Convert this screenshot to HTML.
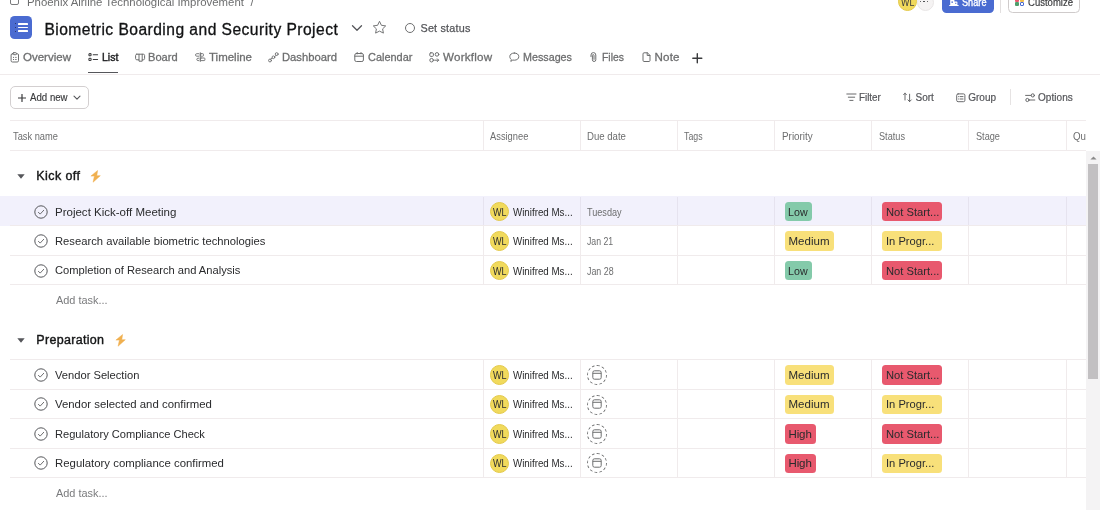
<!DOCTYPE html>
<html><head><meta charset="utf-8"><title>Biometric Boarding and Security Project</title>
<style>
*{box-sizing:border-box;margin:0;padding:0}
html,body{width:1100px;height:510px;overflow:hidden;background:#fff}
body{font-family:"Liberation Sans",sans-serif;position:relative}
.t{position:absolute;white-space:nowrap;line-height:normal}
.b{position:absolute;display:block}
#app{position:absolute;left:0;top:0;width:1100px;height:510px;overflow:hidden;will-change:transform}
</style></head><body>
<div id="app">
<div class="b" style="left:10.4px;top:-4.2px;width:9px;height:9.5px;border:1.1px solid #7a7b7d;border-radius:2px;"></div>
<div class="t" style="left:26.60px;top:-5.50px;font-size:11.6px;color:#6d6e6f;transform:scaleX(0.9821);transform-origin:0 0;">Phoenix Airline Technological Improvement</div>
<div class="t" style="left:250.40px;top:-5.50px;font-size:11.6px;color:#6d6e6f;">/</div>
<div class="b" style="left:916.6px;top:-6.4px;width:17px;height:17px;background:#f5f3f3;border-radius:50%;border:1px solid #e8e5e5;"></div>
<div class="b" style="left:919.6px;top:0.8px;width:1.6px;height:1.6px;background:#3a3b3d;border-radius:50%;"></div>
<div class="b" style="left:923.1px;top:0.8px;width:1.6px;height:1.6px;background:#3a3b3d;border-radius:50%;"></div>
<div class="b" style="left:926.6px;top:0.8px;width:1.6px;height:1.6px;background:#3a3b3d;border-radius:50%;"></div>
<div class="b" style="left:897.6px;top:-8px;width:19px;height:19px;background:#f1da5c;border-radius:50%;border:0.6px solid #e3c94a;"></div>
<div class="t" style="left:901.00px;top:-3.50px;font-size:10px;color:#3a3b3d;transform:scaleX(0.8933);transform-origin:0 0;">WL</div>
<div class="b" style="left:942px;top:-12px;width:51.8px;height:25px;background:#4a6bd1;border-radius:4.5px;"></div>
<svg class="b" style="left:949px;top:-4.4px;" width="10" height="10" viewBox="0 0 10 10" fill="none"><path d="M1.2 9.2V1.8c0-0.4 0.3-0.7 0.7-0.7h2.8c0.4 0 0.7 0.3 0.7 0.7V9.200z M5.4 9.2V5.400h2.300c0.400 0 0.700 0.300 0.700 0.700v3.100z M0.200 9h9.400v1H0.200z" fill="#fff"/><path d="M2.400 5.600h1.600v1.200H2.400z M6.300 6.800h1v1.200h-1z" fill="#4a6bd1"/></svg>
<div class="t" style="left:962.00px;top:-4.30px;font-size:11.3px;color:#fff;transform:scaleX(0.8125);transform-origin:0 0;-webkit-text-stroke:0.35px #fff;">Share</div>
<div class="b" style="left:1000px;top:0px;width:1px;height:12.6px;background:#e2dfdf;"></div>
<div class="b" style="left:1008px;top:-12px;width:72px;height:24.6px;background:#fff;border-radius:4.5px;border:1px solid #cfcbcb;"></div>
<div class="b" style="left:1015px;top:-2.5px;width:4px;height:4px;background:#e8596e;border-radius:1px;"></div>
<div class="b" style="left:1020.4px;top:-2.5px;width:4px;height:4px;background:#f1bd4e;border-radius:1px;"></div>
<div class="b" style="left:1015px;top:2.4px;width:4px;height:4px;background:#4f9e6c;border-radius:1px;"></div>
<div class="b" style="left:1020.4px;top:2.4px;width:4px;height:4px;border-radius:1px;border:1px solid #4a6bd1;"></div>
<div class="t" style="left:1028.00px;top:-4.30px;font-size:11.3px;color:#3a3b3d;transform:scaleX(0.8430);transform-origin:0 0;-webkit-text-stroke:0.2px #3a3b3d;">Customize</div>
<div class="b" style="left:10.1px;top:16.4px;width:22.2px;height:22.4px;background:#4a6bd1;border-radius:4.6px;"></div>
<div class="b" style="left:18.2px;top:22.85px;width:9.9px;height:1.9px;background:#fff;border-radius:0.6px;"></div>
<div class="b" style="left:14.8px;top:23.1px;width:1.4px;height:1.4px;background:#232a52;border-radius:50%;"></div>
<div class="b" style="left:18.2px;top:26.6px;width:9.9px;height:1.9px;background:#fff;border-radius:0.6px;"></div>
<div class="b" style="left:14.8px;top:26.85px;width:1.4px;height:1.4px;background:#232a52;border-radius:50%;"></div>
<div class="b" style="left:18.2px;top:30.35px;width:9.9px;height:1.9px;background:#fff;border-radius:0.6px;"></div>
<div class="b" style="left:14.8px;top:30.6px;width:1.4px;height:1.4px;background:#232a52;border-radius:50%;"></div>
<div class="t" style="left:44.40px;top:20.60px;font-size:15.6px;color:#121314;letter-spacing:0.468px;-webkit-text-stroke:0.3px #121314;">Biometric Boarding and Security Project</div>
<svg class="b" style="left:351px;top:24px;" width="12" height="8" viewBox="0 0 12 8" fill="none"><path d="M1.5 1.8 L6 6.2 L10.5 1.8" stroke="#55565a" stroke-width="1.3" stroke-linecap="round" stroke-linejoin="round"/></svg>
<svg class="b" style="left:372px;top:19.6px;" width="15" height="14" viewBox="0 0 15 14" fill="none"><path d="M7.5 1.3 L9.4 5.3 L13.7 5.9 L10.6 8.9 L11.4 13.1 L7.5 11.1 L3.6 13.1 L4.4 8.9 L1.3 5.9 L5.6 5.3 Z" stroke="#6d6e6f" stroke-width="0.95" stroke-linejoin="round"/></svg>
<div class="b" style="left:405px;top:23px;width:10px;height:10px;border:1.2px solid #6d6e6f;border-radius:50%;"></div>
<div class="t" style="left:420.50px;top:21.70px;font-size:10.8px;color:#55565a;letter-spacing:0.197px;-webkit-text-stroke:0.25px #55565a;">Set status</div>
<div class="t" style="left:23.00px;top:49.70px;font-size:11.6px;color:#6d6e6f;transform:scaleX(0.9929);transform-origin:0 0;-webkit-text-stroke:0.3px #6d6e6f;">Overview</div>
<div class="t" style="left:101.60px;top:49.70px;font-size:11.6px;color:#1e1f21;transform:scaleX(0.9085);transform-origin:0 0;-webkit-text-stroke:0.45px #1e1f21;">List</div>
<div class="t" style="left:148.40px;top:49.70px;font-size:11.6px;color:#6d6e6f;transform:scaleX(0.9562);transform-origin:0 0;-webkit-text-stroke:0.3px #6d6e6f;">Board</div>
<div class="t" style="left:208.60px;top:49.70px;font-size:11.6px;color:#6d6e6f;transform:scaleX(0.9907);transform-origin:0 0;-webkit-text-stroke:0.3px #6d6e6f;">Timeline</div>
<div class="t" style="left:282.40px;top:49.70px;font-size:11.6px;color:#6d6e6f;transform:scaleX(0.9692);transform-origin:0 0;-webkit-text-stroke:0.3px #6d6e6f;">Dashboard</div>
<div class="t" style="left:368.00px;top:49.70px;font-size:11.6px;color:#6d6e6f;transform:scaleX(0.9432);transform-origin:0 0;-webkit-text-stroke:0.3px #6d6e6f;">Calendar</div>
<div class="t" style="left:443.00px;top:49.70px;font-size:11.6px;color:#6d6e6f;letter-spacing:0.240px;-webkit-text-stroke:0.3px #6d6e6f;">Workflow</div>
<div class="t" style="left:523.00px;top:49.70px;font-size:11.6px;color:#6d6e6f;transform:scaleX(0.9268);transform-origin:0 0;-webkit-text-stroke:0.3px #6d6e6f;">Messages</div>
<div class="t" style="left:602.40px;top:49.70px;font-size:11.6px;color:#6d6e6f;transform:scaleX(0.8982);transform-origin:0 0;-webkit-text-stroke:0.3px #6d6e6f;">Files</div>
<div class="t" style="left:654.60px;top:49.70px;font-size:11.6px;color:#6d6e6f;letter-spacing:0.124px;-webkit-text-stroke:0.3px #6d6e6f;">Note</div>
<div class="b" style="left:88.4px;top:71.6px;width:29.6px;height:1.8px;background:#55565a;"></div>
<div class="b" style="left:0px;top:74px;width:1100px;height:1px;background:#f0ebec;"></div>
<svg class="b" style="left:10px;top:52px;" width="10" height="11" viewBox="0 0 10 11" fill="none"><rect x="1.1" y="1.7" width="7.4" height="8.3" rx="1.3" stroke="#6d6e6f" stroke-width="1" stroke-linecap="round" stroke-linejoin="round"/><rect x="3.2" y="0.7" width="3.2" height="2" rx="0.6" stroke="#6d6e6f" stroke-width="1" stroke-linecap="round" stroke-linejoin="round" fill="#fff"/><path d="M3.4 5.4h0.3M5.6 5.4h0.6M3.4 7.5h0.3M5.6 7.5h0.6" stroke="#6d6e6f" stroke-width="1" stroke-linecap="round" stroke-linejoin="round" stroke-width="0.9"/></svg>
<svg class="b" style="left:88px;top:52px;" width="11" height="10" viewBox="0 0 11 10" fill="none"><rect x="0.9" y="1.6" width="2.2" height="2.2" rx="0.8" stroke="#3a3b3d" stroke-width="1.05" stroke-linecap="round" stroke-linejoin="round"/><rect x="0.9" y="6.3" width="2.2" height="2.2" rx="0.8" stroke="#3a3b3d" stroke-width="1.05" stroke-linecap="round" stroke-linejoin="round"/><path d="M5.2 2.8h4.4M5.2 7.5h4.4" stroke="#3a3b3d" stroke-width="1.05" stroke-linecap="round" stroke-linejoin="round"/></svg>
<svg class="b" style="left:134.5px;top:52.5px;" width="11" height="10" viewBox="0 0 11 10" fill="none"><path d="M1.8 1.2h6.6c0.7 0 1.2 0.5 1.2 1.2v3.2c0 0.7-0.5 1.2-1.2 1.2H7.2v1.4H4V6.8H1.8C1.1 6.8 0.6 6.3 0.6 5.6V2.4C0.6 1.7 1.1 1.2 1.8 1.2zM4 1.2v5.6M7.2 1.2v5.6" stroke="#6d6e6f" stroke-width="1" stroke-linecap="round" stroke-linejoin="round"/></svg>
<svg class="b" style="left:195px;top:52px;" width="11" height="10" viewBox="0 0 11 10" fill="none"><path d="M5.3 0.7v8.8" stroke="#6d6e6f" stroke-width="0.9" stroke-linecap="round" stroke-linejoin="round"/><rect x="5.3" y="1.7" width="3.2" height="2.5" rx="0.7" stroke="#6d6e6f" stroke-width="0.9" stroke-linecap="round" stroke-linejoin="round"/><path d="M3.9 1.7H1.700c-0.700 0-1.200 0.500-1.200 1.250s0.500 1.250 1.200 1.250H3.900" stroke="#6d6e6f" stroke-width="0.9" stroke-linecap="round" stroke-linejoin="round"/><rect x="5.300" y="6" width="4.600" height="2.600" rx="0.700" stroke="#6d6e6f" stroke-width="0.9" stroke-linecap="round" stroke-linejoin="round"/><path d="M3.900 6.200H3c-0.700 0-1.200 0.500-1.200 1.200s0.500 1.200 1.200 1.200h0.900" stroke="#6d6e6f" stroke-width="0.9" stroke-linecap="round" stroke-linejoin="round"/></svg>
<svg class="b" style="left:268.3px;top:51.8px;" width="11" height="11" viewBox="0 0 11 11" fill="none"><circle cx="2" cy="8.500" r="1.450" stroke="#6d6e6f" stroke-width="0.9" stroke-linecap="round" stroke-linejoin="round"/><circle cx="5.400" cy="5.300" r="1.350" stroke="#6d6e6f" stroke-width="0.9" stroke-linecap="round" stroke-linejoin="round"/><circle cx="8.700" cy="2.100" r="1.450" stroke="#6d6e6f" stroke-width="0.9" stroke-linecap="round" stroke-linejoin="round"/><path d="M2.600 7.100L4.300 6.100M6.500 4.500L8.100 3.500" stroke="#6d6e6f" stroke-width="0.9" stroke-linecap="round" stroke-linejoin="round"/></svg>
<svg class="b" style="left:353.7px;top:52px;" width="11" height="11" viewBox="0 0 11 11" fill="none"><rect x="0.8" y="1.5" width="8.6" height="8" rx="1.5" stroke="#6d6e6f" stroke-width="1" stroke-linecap="round" stroke-linejoin="round"/><path d="M0.8 4.2h8.6M3.2 0.5v1.4M7 0.5v1.4" stroke="#6d6e6f" stroke-width="1" stroke-linecap="round" stroke-linejoin="round"/></svg>
<svg class="b" style="left:429px;top:51.8px;" width="11" height="11" viewBox="0 0 11 11" fill="none"><rect x="0.8" y="0.8" width="3.6" height="3.6" rx="1" stroke="#6d6e6f" stroke-width="1" stroke-linecap="round" stroke-linejoin="round"/><circle cx="8" cy="2.4" r="1.8" stroke="#6d6e6f" stroke-width="1" stroke-linecap="round" stroke-linejoin="round"/><circle cx="2.6" cy="8.2" r="1.8" stroke="#6d6e6f" stroke-width="1" stroke-linecap="round" stroke-linejoin="round"/><path d="M5.6 8.2h4M8.3 6.8l1.4 1.4-1.4 1.4" stroke="#6d6e6f" stroke-width="1" stroke-linecap="round" stroke-linejoin="round"/></svg>
<svg class="b" style="left:508.6px;top:52.4px;" width="11" height="11" viewBox="0 0 11 11" fill="none"><path d="M5.3 1C8 1 9.8 2.5 9.8 4.6S8 8.2 5.3 8.2c-0.5 0-1-0.06-1.5-0.17L1.8 9.4l0.5-1.9C1.4 6.8 0.8 5.8 0.8 4.6 0.8 2.5 2.6 1 5.3 1z" stroke="#6d6e6f" stroke-width="1" stroke-linecap="round" stroke-linejoin="round"/></svg>
<svg class="b" style="left:589.5px;top:52px;" width="8" height="10" viewBox="0 0 8 10" fill="none"><path d="M1 4.6V3a2.4 2.4 0 0 1 4.8 0v4.8a1.7 1.7 0 0 1-3.4 0V3.4a0.8 0.8 0 0 1 1.6 0v4" stroke="#6d6e6f" stroke-width="1" stroke-linecap="round" stroke-linejoin="round"/></svg>
<svg class="b" style="left:641.5px;top:52px;" width="9" height="10" viewBox="0 0 9 10" fill="none"><path d="M1 1.7c0-0.5 0.4-0.9 0.9-0.9h3.5L8 3.4v5.2c0 0.5-0.4 0.9-0.9 0.9H1.9C1.4 9.5 1 9.1 1 8.600z M5.2 0.8v2.7H8" stroke="#6d6e6f" stroke-width="1" stroke-linecap="round" stroke-linejoin="round"/></svg>
<svg class="b" style="left:692px;top:52.6px;" width="11" height="11" viewBox="0 0 11 11" fill="none"><path d="M5.3 0.8v9M0.8 5.3h9" stroke="#3a3b3d" stroke-width="1.4" stroke-linecap="round"/></svg>
<div class="b" style="left:10px;top:86.4px;width:78.6px;height:22.4px;background:#fff;border-radius:5px;border:1px solid #d3cfd0;"></div>
<svg class="b" style="left:18px;top:93.6px;" width="8" height="8" viewBox="0 0 8 8" fill="none"><path d="M4 0.4v7.2M0.4 4h7.2" stroke="#3a3b3d" stroke-width="1.2" stroke-linecap="round"/></svg>
<div class="t" style="left:30.40px;top:92.30px;font-size:10px;color:#3a3b3d;transform:scaleX(0.9662);transform-origin:0 0;-webkit-text-stroke:0.15px #3a3b3d;">Add new</div>
<svg class="b" style="left:73px;top:94.5px;" width="8" height="6" viewBox="0 0 8 6" fill="none"><path d="M1 1.2l3 3 3-3" stroke="#55565a" stroke-width="1.1" stroke-linecap="round" stroke-linejoin="round"/></svg>
<svg class="b" style="left:845.5px;top:93.1px;" width="11" height="9" viewBox="0 0 11 9" fill="none"><path d="M0.8 1h9.2M2.3 4.2h6.4M3.8 7.4h3.2" stroke="#616264" stroke-width="0.95" stroke-linecap="round" stroke-linejoin="round"/></svg>
<div class="t" style="left:858.90px;top:92.30px;font-size:10px;color:#55565a;transform:scaleX(0.9810);transform-origin:0 0;-webkit-text-stroke:0.2px #55565a;">Filter</div>
<svg class="b" style="left:902px;top:92px;" width="11" height="11" viewBox="0 0 11 11" fill="none"><path d="M3 8V1.2M1.6 2.7L3 1.2l1.4 1.5M7.6 2.2v7.4M5.9 7.9l1.7 1.7 1.7-1.7" stroke="#616264" stroke-width="0.95" stroke-linecap="round" stroke-linejoin="round"/></svg>
<div class="t" style="left:915.60px;top:92.30px;font-size:10px;color:#55565a;letter-spacing:-0.035px;-webkit-text-stroke:0.2px #55565a;">Sort</div>
<svg class="b" style="left:955.5px;top:93px;" width="10" height="10" viewBox="0 0 10 10" fill="none"><rect x="0.7" y="0.9" width="8.2" height="7.8" rx="1.4" stroke="#616264" stroke-width="0.95" stroke-linecap="round" stroke-linejoin="round"/><path d="M2.6 3.6h0.4M4.4 3.6h2.6M2.6 6h0.4M4.4 6h2.6" stroke="#616264" stroke-width="0.95" stroke-linecap="round" stroke-linejoin="round" stroke-width="0.9"/></svg>
<div class="t" style="left:968.30px;top:92.30px;font-size:10px;color:#55565a;letter-spacing:-0.019px;-webkit-text-stroke:0.2px #55565a;">Group</div>
<div class="b" style="left:1010px;top:89px;width:1px;height:16px;background:#e6e3e3;"></div>
<svg class="b" style="left:1024.5px;top:93px;" width="11" height="10" viewBox="0 0 11 10" fill="none"><circle cx="7.8" cy="2.4" r="1.6" stroke="#616264" stroke-width="0.95" stroke-linecap="round" stroke-linejoin="round"/><circle cx="2.4" cy="7" r="1.6" stroke="#616264" stroke-width="0.95" stroke-linecap="round" stroke-linejoin="round"/><path d="M0.6 2.4h5.4M4.2 7h5.6" stroke="#616264" stroke-width="0.95" stroke-linecap="round" stroke-linejoin="round"/></svg>
<div class="t" style="left:1038.00px;top:92.30px;font-size:10px;color:#55565a;letter-spacing:0.048px;-webkit-text-stroke:0.2px #55565a;">Options</div>
<div class="b" style="left:10px;top:120px;width:1076px;height:1px;background:#f0ebec;"></div>
<div class="b" style="left:10px;top:150px;width:1076px;height:1px;background:#f0ebec;"></div>
<div class="b" style="left:483px;top:121px;width:1px;height:29px;background:#f0ebec;"></div>
<div class="b" style="left:580px;top:121px;width:1px;height:29px;background:#f0ebec;"></div>
<div class="b" style="left:677px;top:121px;width:1px;height:29px;background:#f0ebec;"></div>
<div class="b" style="left:774px;top:121px;width:1px;height:29px;background:#f0ebec;"></div>
<div class="b" style="left:871.4px;top:121px;width:1px;height:29px;background:#f0ebec;"></div>
<div class="b" style="left:968.4px;top:121px;width:1px;height:29px;background:#f0ebec;"></div>
<div class="b" style="left:1066px;top:121px;width:1px;height:29px;background:#f0ebec;"></div>
<div class="t" style="left:13.40px;top:131.00px;font-size:10.2px;color:#6d6e6f;transform:scaleX(0.9124);transform-origin:0 0;">Task name</div>
<div class="t" style="left:490.00px;top:131.00px;font-size:10.2px;color:#6d6e6f;transform:scaleX(0.9151);transform-origin:0 0;">Assignee</div>
<div class="t" style="left:587.40px;top:131.00px;font-size:10.2px;color:#6d6e6f;transform:scaleX(0.9421);transform-origin:0 0;">Due date</div>
<div class="t" style="left:684.40px;top:131.00px;font-size:10.2px;color:#6d6e6f;transform:scaleX(0.8633);transform-origin:0 0;">Tags</div>
<div class="t" style="left:781.60px;top:131.00px;font-size:10.2px;color:#6d6e6f;transform:scaleX(0.9705);transform-origin:0 0;">Priority</div>
<div class="t" style="left:878.60px;top:131.00px;font-size:10.2px;color:#6d6e6f;transform:scaleX(0.8991);transform-origin:0 0;">Status</div>
<div class="t" style="left:976.00px;top:131.00px;font-size:10.2px;color:#6d6e6f;transform:scaleX(0.9004);transform-origin:0 0;">Stage</div>
<div class="b" style="left:1073px;top:125px;width:13px;height:20px;overflow:hidden">
<div class="t" style="left:0.00px;top:6.00px;font-size:10.2px;color:#6d6e6f;transform:scaleX(0.9554);transform-origin:0 0;">Qu</div>
</div>
<svg class="b" style="left:17.4px;top:173.9px;" width="8" height="5" viewBox="0 0 8 5" fill="none"><path d="M0.3 0.3h7.4L4 4.7z" fill="#55565a"/></svg>
<div class="t" style="left:36.30px;top:169.30px;font-size:12.5px;color:#151617;letter-spacing:0.405px;-webkit-text-stroke:0.4px #151617;">Kick off</div>
<svg class="b" style="left:90.0px;top:170.0px;" width="11" height="13" viewBox="0 0 11 13" fill="none"><path d="M7.6 0.5L0.9 6.1h3.5L3.1 12.2 10.3 5.7H6.8z" fill="#f0b050" stroke="#f0b050" stroke-width="0.5" stroke-linejoin="round"/></svg>
<div class="b" style="left:0px;top:196px;width:1086px;height:30px;background:#f2f1fc;"></div>
<div class="b" style="left:483px;top:197px;width:1px;height:29px;background:#e6e3ef;"></div>
<div class="b" style="left:580px;top:197px;width:1px;height:29px;background:#e6e3ef;"></div>
<div class="b" style="left:677px;top:197px;width:1px;height:29px;background:#e6e3ef;"></div>
<div class="b" style="left:774px;top:197px;width:1px;height:29px;background:#e6e3ef;"></div>
<div class="b" style="left:871.4px;top:197px;width:1px;height:29px;background:#e6e3ef;"></div>
<div class="b" style="left:968.4px;top:197px;width:1px;height:29px;background:#e6e3ef;"></div>
<div class="b" style="left:1066px;top:197px;width:1px;height:29px;background:#e6e3ef;"></div>
<svg class="b" style="left:33.8px;top:204.625px;" width="14" height="14" viewBox="0 0 14 14" fill="none"><circle cx="7" cy="7" r="6.2" stroke="#55565a" stroke-width="1"/><path d="M4.4 7.3l1.8 1.8 3.5-3.8" stroke="#5f6062" stroke-width="0.9" stroke-linecap="round" stroke-linejoin="round"/></svg>
<div class="t" style="left:55.00px;top:204.52px;font-size:11.6px;color:#2a2b2d;transform:scaleX(0.9928);transform-origin:0 0;">Project Kick-off Meeting</div>
<div class="b" style="left:490px;top:201.92499999999998px;width:19.4px;height:19.4px;background:#f1da5c;border-radius:50%;border:0.6px solid #e3c94a;"></div>
<div class="t" style="left:493.00px;top:206.62px;font-size:10px;color:#2a2b2d;transform:scaleX(0.9067);transform-origin:0 0;">WL</div>
<div class="t" style="left:513.40px;top:206.62px;font-size:10px;color:#2a2b2d;transform:scaleX(0.9752);transform-origin:0 0;">Winifred Ms...</div>
<div class="t" style="left:587.40px;top:206.62px;font-size:10px;color:#6d6e6f;transform:scaleX(0.9109);transform-origin:0 0;">Tuesday</div>
<div class="b" style="left:785px;top:202.02499999999998px;width:26.6px;height:19.4px;background:#84caaa;border-radius:3.5px;"></div>
<div class="t" style="left:788.40px;top:205.62px;font-size:11.5px;color:#2a2b2d;transform:scaleX(0.9290);transform-origin:0 0;">Low</div>
<div class="b" style="left:882px;top:202.02499999999998px;width:60px;height:19.4px;background:#e8596e;border-radius:3.5px;"></div>
<div class="t" style="left:885.60px;top:205.62px;font-size:11.5px;color:#2a2b2d;transform:scaleX(0.9716);transform-origin:0 0;">Not Start...</div>
<div class="b" style="left:10px;top:225px;width:1076px;height:1px;background:#f0ebec;"></div>
<div class="b" style="left:483px;top:226px;width:1px;height:29px;background:#f0ebec;"></div>
<div class="b" style="left:580px;top:226px;width:1px;height:29px;background:#f0ebec;"></div>
<div class="b" style="left:677px;top:226px;width:1px;height:29px;background:#f0ebec;"></div>
<div class="b" style="left:774px;top:226px;width:1px;height:29px;background:#f0ebec;"></div>
<div class="b" style="left:871.4px;top:226px;width:1px;height:29px;background:#f0ebec;"></div>
<div class="b" style="left:968.4px;top:226px;width:1px;height:29px;background:#f0ebec;"></div>
<div class="b" style="left:1066px;top:226px;width:1px;height:29px;background:#f0ebec;"></div>
<svg class="b" style="left:33.8px;top:234.075px;" width="14" height="14" viewBox="0 0 14 14" fill="none"><circle cx="7" cy="7" r="6.2" stroke="#55565a" stroke-width="1"/><path d="M4.4 7.3l1.8 1.8 3.5-3.8" stroke="#5f6062" stroke-width="0.9" stroke-linecap="round" stroke-linejoin="round"/></svg>
<div class="t" style="left:55.00px;top:233.97px;font-size:11.6px;color:#2a2b2d;transform:scaleX(0.9687);transform-origin:0 0;">Research available biometric technologies</div>
<div class="b" style="left:490px;top:231.37499999999997px;width:19.4px;height:19.4px;background:#f1da5c;border-radius:50%;border:0.6px solid #e3c94a;"></div>
<div class="t" style="left:493.00px;top:236.07px;font-size:10px;color:#2a2b2d;transform:scaleX(0.9067);transform-origin:0 0;">WL</div>
<div class="t" style="left:513.40px;top:236.07px;font-size:10px;color:#2a2b2d;transform:scaleX(0.9752);transform-origin:0 0;">Winifred Ms...</div>
<div class="t" style="left:587.40px;top:236.07px;font-size:10px;color:#6d6e6f;transform:scaleX(0.8726);transform-origin:0 0;">Jan 21</div>
<div class="b" style="left:785px;top:231.47499999999997px;width:48.6px;height:19.4px;background:#f8e07a;border-radius:3.5px;"></div>
<div class="t" style="left:788.40px;top:235.07px;font-size:11.5px;color:#2a2b2d;letter-spacing:0.049px;">Medium</div>
<div class="b" style="left:882px;top:231.47499999999997px;width:60px;height:19.4px;background:#f8e07a;border-radius:3.5px;"></div>
<div class="t" style="left:885.60px;top:235.07px;font-size:11.5px;color:#2a2b2d;transform:scaleX(0.9707);transform-origin:0 0;">In Progr...</div>
<div class="b" style="left:10px;top:255px;width:1076px;height:1px;background:#f0ebec;"></div>
<div class="b" style="left:483px;top:256px;width:1px;height:29px;background:#f0ebec;"></div>
<div class="b" style="left:580px;top:256px;width:1px;height:29px;background:#f0ebec;"></div>
<div class="b" style="left:677px;top:256px;width:1px;height:29px;background:#f0ebec;"></div>
<div class="b" style="left:774px;top:256px;width:1px;height:29px;background:#f0ebec;"></div>
<div class="b" style="left:871.4px;top:256px;width:1px;height:29px;background:#f0ebec;"></div>
<div class="b" style="left:968.4px;top:256px;width:1px;height:29px;background:#f0ebec;"></div>
<div class="b" style="left:1066px;top:256px;width:1px;height:29px;background:#f0ebec;"></div>
<svg class="b" style="left:33.8px;top:263.52500000000003px;" width="14" height="14" viewBox="0 0 14 14" fill="none"><circle cx="7" cy="7" r="6.2" stroke="#55565a" stroke-width="1"/><path d="M4.4 7.3l1.8 1.8 3.5-3.8" stroke="#5f6062" stroke-width="0.9" stroke-linecap="round" stroke-linejoin="round"/></svg>
<div class="t" style="left:55.00px;top:263.43px;font-size:11.6px;color:#2a2b2d;transform:scaleX(0.9621);transform-origin:0 0;">Completion of Research and Analysis</div>
<div class="b" style="left:490px;top:260.82500000000005px;width:19.4px;height:19.4px;background:#f1da5c;border-radius:50%;border:0.6px solid #e3c94a;"></div>
<div class="t" style="left:493.00px;top:265.53px;font-size:10px;color:#2a2b2d;transform:scaleX(0.9067);transform-origin:0 0;">WL</div>
<div class="t" style="left:513.40px;top:265.53px;font-size:10px;color:#2a2b2d;transform:scaleX(0.9752);transform-origin:0 0;">Winifred Ms...</div>
<div class="t" style="left:587.40px;top:265.53px;font-size:10px;color:#6d6e6f;transform:scaleX(0.8859);transform-origin:0 0;">Jan 28</div>
<div class="b" style="left:785px;top:260.925px;width:26.6px;height:19.4px;background:#84caaa;border-radius:3.5px;"></div>
<div class="t" style="left:788.40px;top:264.53px;font-size:11.5px;color:#2a2b2d;transform:scaleX(0.9290);transform-origin:0 0;">Low</div>
<div class="b" style="left:882px;top:260.925px;width:60px;height:19.4px;background:#e8596e;border-radius:3.5px;"></div>
<div class="t" style="left:885.60px;top:264.53px;font-size:11.5px;color:#2a2b2d;transform:scaleX(0.9716);transform-origin:0 0;">Not Start...</div>
<div class="b" style="left:10px;top:284px;width:1076px;height:1px;background:#f0ebec;"></div>
<div class="t" style="left:56.00px;top:293.95px;font-size:11.5px;color:#7a7b7d;transform:scaleX(0.9497);transform-origin:0 0;">Add task...</div>
<svg class="b" style="left:17.4px;top:337.5px;" width="8" height="5" viewBox="0 0 8 5" fill="none"><path d="M0.3 0.3h7.4L4 4.7z" fill="#55565a"/></svg>
<div class="t" style="left:36.30px;top:332.90px;font-size:12.5px;color:#151617;letter-spacing:0.307px;-webkit-text-stroke:0.4px #151617;">Preparation</div>
<svg class="b" style="left:114.6px;top:333.6px;" width="11" height="13" viewBox="0 0 11 13" fill="none"><path d="M7.6 0.5L0.9 6.1h3.5L3.1 12.2 10.3 5.7H6.8z" fill="#f0b050" stroke="#f0b050" stroke-width="0.5" stroke-linejoin="round"/></svg>
<div class="b" style="left:10px;top:359px;width:1076px;height:1px;background:#f0ebec;"></div>
<div class="b" style="left:483px;top:360px;width:1px;height:29px;background:#f0ebec;"></div>
<div class="b" style="left:580px;top:360px;width:1px;height:29px;background:#f0ebec;"></div>
<div class="b" style="left:677px;top:360px;width:1px;height:29px;background:#f0ebec;"></div>
<div class="b" style="left:774px;top:360px;width:1px;height:29px;background:#f0ebec;"></div>
<div class="b" style="left:871.4px;top:360px;width:1px;height:29px;background:#f0ebec;"></div>
<div class="b" style="left:968.4px;top:360px;width:1px;height:29px;background:#f0ebec;"></div>
<div class="b" style="left:1066px;top:360px;width:1px;height:29px;background:#f0ebec;"></div>
<svg class="b" style="left:33.8px;top:367.92500000000007px;" width="14" height="14" viewBox="0 0 14 14" fill="none"><circle cx="7" cy="7" r="6.2" stroke="#55565a" stroke-width="1"/><path d="M4.4 7.3l1.8 1.8 3.5-3.8" stroke="#5f6062" stroke-width="0.9" stroke-linecap="round" stroke-linejoin="round"/></svg>
<div class="t" style="left:55.00px;top:367.83px;font-size:11.6px;color:#2a2b2d;transform:scaleX(0.9622);transform-origin:0 0;">Vendor Selection</div>
<div class="b" style="left:490px;top:365.2250000000001px;width:19.4px;height:19.4px;background:#f1da5c;border-radius:50%;border:0.6px solid #e3c94a;"></div>
<div class="t" style="left:493.00px;top:369.93px;font-size:10px;color:#2a2b2d;transform:scaleX(0.9067);transform-origin:0 0;">WL</div>
<div class="t" style="left:513.40px;top:369.93px;font-size:10px;color:#2a2b2d;transform:scaleX(0.9752);transform-origin:0 0;">Winifred Ms...</div>
<div class="b" style="left:587px;top:365.12500000000006px;width:20px;height:20px;border-radius:50%;border:1px dashed #6d6e6f;"></div>
<svg class="b" style="left:592px;top:369.92500000000007px;" width="10" height="10" viewBox="0 0 10 10" fill="none"><rect x="0.8" y="0.8" width="8.4" height="8.4" rx="1.7" stroke="#6d6e6f" stroke-width="1"/><path d="M0.8 3.3h8.4" stroke="#6d6e6f" stroke-width="1"/></svg>
<div class="b" style="left:785px;top:365.32500000000005px;width:48.6px;height:19.4px;background:#f8e07a;border-radius:3.5px;"></div>
<div class="t" style="left:788.40px;top:368.93px;font-size:11.5px;color:#2a2b2d;letter-spacing:0.049px;">Medium</div>
<div class="b" style="left:882px;top:365.32500000000005px;width:60px;height:19.4px;background:#e8596e;border-radius:3.5px;"></div>
<div class="t" style="left:885.60px;top:368.93px;font-size:11.5px;color:#2a2b2d;transform:scaleX(0.9716);transform-origin:0 0;">Not Start...</div>
<div class="b" style="left:10px;top:389px;width:1076px;height:1px;background:#f0ebec;"></div>
<div class="b" style="left:483px;top:390px;width:1px;height:29px;background:#f0ebec;"></div>
<div class="b" style="left:580px;top:390px;width:1px;height:29px;background:#f0ebec;"></div>
<div class="b" style="left:677px;top:390px;width:1px;height:29px;background:#f0ebec;"></div>
<div class="b" style="left:774px;top:390px;width:1px;height:29px;background:#f0ebec;"></div>
<div class="b" style="left:871.4px;top:390px;width:1px;height:29px;background:#f0ebec;"></div>
<div class="b" style="left:968.4px;top:390px;width:1px;height:29px;background:#f0ebec;"></div>
<div class="b" style="left:1066px;top:390px;width:1px;height:29px;background:#f0ebec;"></div>
<svg class="b" style="left:33.8px;top:397.37500000000006px;" width="14" height="14" viewBox="0 0 14 14" fill="none"><circle cx="7" cy="7" r="6.2" stroke="#55565a" stroke-width="1"/><path d="M4.4 7.3l1.8 1.8 3.5-3.8" stroke="#5f6062" stroke-width="0.9" stroke-linecap="round" stroke-linejoin="round"/></svg>
<div class="t" style="left:55.00px;top:397.28px;font-size:11.6px;color:#2a2b2d;transform:scaleX(0.9817);transform-origin:0 0;">Vendor selected and confirmed</div>
<div class="b" style="left:490px;top:394.67500000000007px;width:19.4px;height:19.4px;background:#f1da5c;border-radius:50%;border:0.6px solid #e3c94a;"></div>
<div class="t" style="left:493.00px;top:399.38px;font-size:10px;color:#2a2b2d;transform:scaleX(0.9067);transform-origin:0 0;">WL</div>
<div class="t" style="left:513.40px;top:399.38px;font-size:10px;color:#2a2b2d;transform:scaleX(0.9752);transform-origin:0 0;">Winifred Ms...</div>
<div class="b" style="left:587px;top:394.57500000000005px;width:20px;height:20px;border-radius:50%;border:1px dashed #6d6e6f;"></div>
<svg class="b" style="left:592px;top:399.37500000000006px;" width="10" height="10" viewBox="0 0 10 10" fill="none"><rect x="0.8" y="0.8" width="8.4" height="8.4" rx="1.7" stroke="#6d6e6f" stroke-width="1"/><path d="M0.8 3.3h8.4" stroke="#6d6e6f" stroke-width="1"/></svg>
<div class="b" style="left:785px;top:394.77500000000003px;width:48.6px;height:19.4px;background:#f8e07a;border-radius:3.5px;"></div>
<div class="t" style="left:788.40px;top:398.38px;font-size:11.5px;color:#2a2b2d;letter-spacing:0.049px;">Medium</div>
<div class="b" style="left:882px;top:394.77500000000003px;width:60px;height:19.4px;background:#f8e07a;border-radius:3.5px;"></div>
<div class="t" style="left:885.60px;top:398.38px;font-size:11.5px;color:#2a2b2d;transform:scaleX(0.9707);transform-origin:0 0;">In Progr...</div>
<div class="b" style="left:10px;top:418px;width:1076px;height:1px;background:#f0ebec;"></div>
<div class="b" style="left:483px;top:419px;width:1px;height:29px;background:#f0ebec;"></div>
<div class="b" style="left:580px;top:419px;width:1px;height:29px;background:#f0ebec;"></div>
<div class="b" style="left:677px;top:419px;width:1px;height:29px;background:#f0ebec;"></div>
<div class="b" style="left:774px;top:419px;width:1px;height:29px;background:#f0ebec;"></div>
<div class="b" style="left:871.4px;top:419px;width:1px;height:29px;background:#f0ebec;"></div>
<div class="b" style="left:968.4px;top:419px;width:1px;height:29px;background:#f0ebec;"></div>
<div class="b" style="left:1066px;top:419px;width:1px;height:29px;background:#f0ebec;"></div>
<svg class="b" style="left:33.8px;top:426.82500000000005px;" width="14" height="14" viewBox="0 0 14 14" fill="none"><circle cx="7" cy="7" r="6.2" stroke="#55565a" stroke-width="1"/><path d="M4.4 7.3l1.8 1.8 3.5-3.8" stroke="#5f6062" stroke-width="0.9" stroke-linecap="round" stroke-linejoin="round"/></svg>
<div class="t" style="left:55.00px;top:426.73px;font-size:11.6px;color:#2a2b2d;transform:scaleX(0.9574);transform-origin:0 0;">Regulatory Compliance Check</div>
<div class="b" style="left:490px;top:424.12500000000006px;width:19.4px;height:19.4px;background:#f1da5c;border-radius:50%;border:0.6px solid #e3c94a;"></div>
<div class="t" style="left:493.00px;top:428.83px;font-size:10px;color:#2a2b2d;transform:scaleX(0.9067);transform-origin:0 0;">WL</div>
<div class="t" style="left:513.40px;top:428.83px;font-size:10px;color:#2a2b2d;transform:scaleX(0.9752);transform-origin:0 0;">Winifred Ms...</div>
<div class="b" style="left:587px;top:424.02500000000003px;width:20px;height:20px;border-radius:50%;border:1px dashed #6d6e6f;"></div>
<svg class="b" style="left:592px;top:428.82500000000005px;" width="10" height="10" viewBox="0 0 10 10" fill="none"><rect x="0.8" y="0.8" width="8.4" height="8.4" rx="1.7" stroke="#6d6e6f" stroke-width="1"/><path d="M0.8 3.3h8.4" stroke="#6d6e6f" stroke-width="1"/></svg>
<div class="b" style="left:785px;top:424.225px;width:31px;height:19.4px;background:#e8596e;border-radius:3.5px;"></div>
<div class="t" style="left:788.40px;top:427.83px;font-size:11.5px;color:#2a2b2d;letter-spacing:-0.063px;">High</div>
<div class="b" style="left:882px;top:424.225px;width:60px;height:19.4px;background:#e8596e;border-radius:3.5px;"></div>
<div class="t" style="left:885.60px;top:427.83px;font-size:11.5px;color:#2a2b2d;transform:scaleX(0.9716);transform-origin:0 0;">Not Start...</div>
<div class="b" style="left:10px;top:448px;width:1076px;height:1px;background:#f0ebec;"></div>
<div class="b" style="left:483px;top:449px;width:1px;height:29px;background:#f0ebec;"></div>
<div class="b" style="left:580px;top:449px;width:1px;height:29px;background:#f0ebec;"></div>
<div class="b" style="left:677px;top:449px;width:1px;height:29px;background:#f0ebec;"></div>
<div class="b" style="left:774px;top:449px;width:1px;height:29px;background:#f0ebec;"></div>
<div class="b" style="left:871.4px;top:449px;width:1px;height:29px;background:#f0ebec;"></div>
<div class="b" style="left:968.4px;top:449px;width:1px;height:29px;background:#f0ebec;"></div>
<div class="b" style="left:1066px;top:449px;width:1px;height:29px;background:#f0ebec;"></div>
<svg class="b" style="left:33.8px;top:456.27500000000003px;" width="14" height="14" viewBox="0 0 14 14" fill="none"><circle cx="7" cy="7" r="6.2" stroke="#55565a" stroke-width="1"/><path d="M4.4 7.3l1.8 1.8 3.5-3.8" stroke="#5f6062" stroke-width="0.9" stroke-linecap="round" stroke-linejoin="round"/></svg>
<div class="t" style="left:55.00px;top:456.18px;font-size:11.6px;color:#2a2b2d;transform:scaleX(0.9817);transform-origin:0 0;">Regulatory compliance confirmed</div>
<div class="b" style="left:490px;top:453.57500000000005px;width:19.4px;height:19.4px;background:#f1da5c;border-radius:50%;border:0.6px solid #e3c94a;"></div>
<div class="t" style="left:493.00px;top:458.28px;font-size:10px;color:#2a2b2d;transform:scaleX(0.9067);transform-origin:0 0;">WL</div>
<div class="t" style="left:513.40px;top:458.28px;font-size:10px;color:#2a2b2d;transform:scaleX(0.9752);transform-origin:0 0;">Winifred Ms...</div>
<div class="b" style="left:587px;top:453.475px;width:20px;height:20px;border-radius:50%;border:1px dashed #6d6e6f;"></div>
<svg class="b" style="left:592px;top:458.27500000000003px;" width="10" height="10" viewBox="0 0 10 10" fill="none"><rect x="0.8" y="0.8" width="8.4" height="8.4" rx="1.7" stroke="#6d6e6f" stroke-width="1"/><path d="M0.8 3.3h8.4" stroke="#6d6e6f" stroke-width="1"/></svg>
<div class="b" style="left:785px;top:453.675px;width:31px;height:19.4px;background:#e8596e;border-radius:3.5px;"></div>
<div class="t" style="left:788.40px;top:457.28px;font-size:11.5px;color:#2a2b2d;letter-spacing:-0.063px;">High</div>
<div class="b" style="left:882px;top:453.675px;width:60px;height:19.4px;background:#f8e07a;border-radius:3.5px;"></div>
<div class="t" style="left:885.60px;top:457.28px;font-size:11.5px;color:#2a2b2d;transform:scaleX(0.9707);transform-origin:0 0;">In Progr...</div>
<div class="b" style="left:10px;top:477px;width:1076px;height:1px;background:#f0ebec;"></div>
<div class="t" style="left:56.00px;top:486.70px;font-size:11.5px;color:#7a7b7d;transform:scaleX(0.9497);transform-origin:0 0;">Add task...</div>
<div class="b" style="left:1086px;top:151px;width:14px;height:359px;background:#f4f3f4;"></div>
<svg class="b" style="left:1089.6px;top:156px;" width="7" height="4" viewBox="0 0 7 4" fill="none"><path d="M0.4 3.6L3.5 0.4l3.1 3.2z" fill="#8a8a8a"/></svg>
<div class="b" style="left:1088px;top:164px;width:10px;height:214.5px;background:#c2c0c2;"></div>
</div>
</body></html>
